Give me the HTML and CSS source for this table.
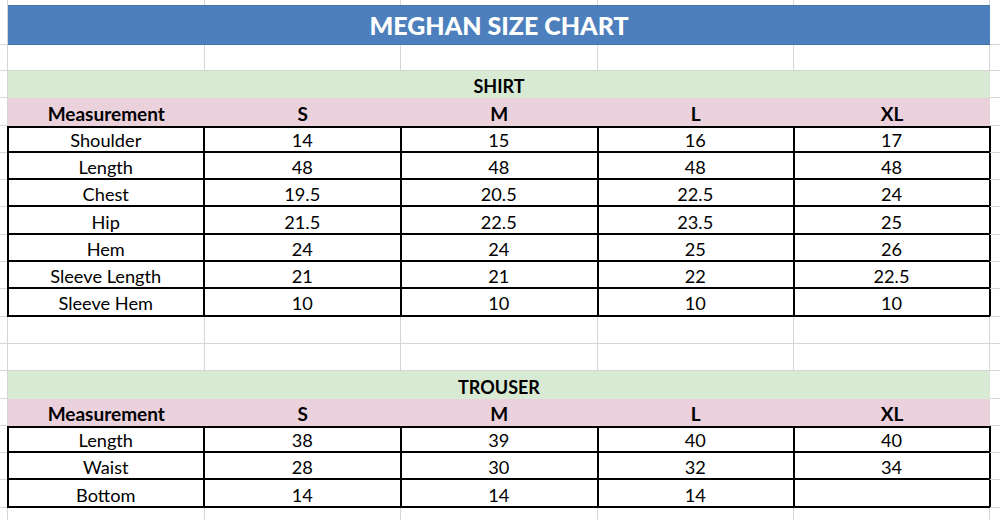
FILE: index.html
```html
<!DOCTYPE html>
<html lang="en">
<head>
<meta charset="utf-8">
<title>Meghan Size Chart</title>
<link rel="stylesheet" href="styles.css">
</head>
<body>
<div class="sheet">
  <div class="row r-top"><div class="c stub"></div><div class="c"></div><div class="c"></div><div class="c"></div><div class="c"></div><div class="c"></div><div class="c tail"></div></div>
  <div class="row r-title"><div class="c stub"></div><div class="c span title">MEGHAN SIZE CHART</div><div class="c tail"></div></div>
  <div class="row r-gap"><div class="c stub"></div><div class="c"></div><div class="c"></div><div class="c"></div><div class="c"></div><div class="c"></div><div class="c tail"></div></div>

  <div class="row"><div class="c stub"></div><div class="c span section">SHIRT</div><div class="c tail"></div></div>
  <div class="row"><div class="c stub"></div><div class="c head">Measurement</div><div class="c head">S</div><div class="c head">M</div><div class="c head">L</div><div class="c head">XL</div><div class="c tail"></div></div>
  <div class="row data first"><div class="c stub"></div><div class="c b lead">Shoulder</div><div class="c b">14</div><div class="c b">15</div><div class="c b">16</div><div class="c b">17</div><div class="c tail"></div></div>
  <div class="row data"><div class="c stub"></div><div class="c b lead">Length</div><div class="c b">48</div><div class="c b">48</div><div class="c b">48</div><div class="c b">48</div><div class="c tail"></div></div>
  <div class="row data"><div class="c stub"></div><div class="c b lead">Chest</div><div class="c b">19.5</div><div class="c b">20.5</div><div class="c b">22.5</div><div class="c b">24</div><div class="c tail"></div></div>
  <div class="row data"><div class="c stub"></div><div class="c b lead">Hip</div><div class="c b">21.5</div><div class="c b">22.5</div><div class="c b">23.5</div><div class="c b">25</div><div class="c tail"></div></div>
  <div class="row data"><div class="c stub"></div><div class="c b lead">Hem</div><div class="c b">24</div><div class="c b">24</div><div class="c b">25</div><div class="c b">26</div><div class="c tail"></div></div>
  <div class="row data"><div class="c stub"></div><div class="c b lead">Sleeve Length</div><div class="c b">21</div><div class="c b">21</div><div class="c b">22</div><div class="c b">22.5</div><div class="c tail"></div></div>
  <div class="row data"><div class="c stub"></div><div class="c b lead">Sleeve Hem</div><div class="c b">10</div><div class="c b">10</div><div class="c b">10</div><div class="c b">10</div><div class="c tail"></div></div>

  <div class="row"><div class="c stub"></div><div class="c"></div><div class="c"></div><div class="c"></div><div class="c"></div><div class="c"></div><div class="c tail"></div></div>
  <div class="row"><div class="c stub"></div><div class="c"></div><div class="c"></div><div class="c"></div><div class="c"></div><div class="c"></div><div class="c tail"></div></div>

  <div class="row"><div class="c stub"></div><div class="c span section">TROUSER</div><div class="c tail"></div></div>
  <div class="row"><div class="c stub"></div><div class="c head">Measurement</div><div class="c head">S</div><div class="c head">M</div><div class="c head">L</div><div class="c head">XL</div><div class="c tail"></div></div>
  <div class="row data first"><div class="c stub"></div><div class="c b lead">Length</div><div class="c b">38</div><div class="c b">39</div><div class="c b">40</div><div class="c b">40</div><div class="c tail"></div></div>
  <div class="row data"><div class="c stub"></div><div class="c b lead">Waist</div><div class="c b">28</div><div class="c b">30</div><div class="c b">32</div><div class="c b">34</div><div class="c tail"></div></div>
  <div class="row data"><div class="c stub"></div><div class="c b lead">Bottom</div><div class="c b">14</div><div class="c b">14</div><div class="c b">14</div><div class="c b"></div><div class="c tail"></div></div>

  <div class="row"><div class="c stub"></div><div class="c"></div><div class="c"></div><div class="c"></div><div class="c"></div><div class="c"></div><div class="c tail"></div></div>
</div>
</body>
</html>
```

FILE: styles.css
```css
* { box-sizing: border-box; }
html, body {
  margin: 0;
  padding: 0;
  background: #ffffff;
}
body {
  width: 1000px;
  height: 520px;
  overflow: hidden;
  font-family: Lato, "Open Sans", "Liberation Sans", sans-serif;
  color: #000;
}
.sheet {
  display: flex;
  flex-direction: column;
}
.row {
  display: grid;
  grid-template-columns: 8px 196.5px 196.5px 196.5px 196.5px 196px 1fr;
  height: 27.3px;
  flex: none;
}
.r-top { height: 5px; }
.r-title { height: 40px; }
.r-gap { height: 26px; }
.c {
  display: flex;
  align-items: flex-end;
  justify-content: center;
  padding-bottom: 3px;
  font-size: 18.2px;
  line-height: 1;
  border-right: 1px solid #d6d6d6;
  border-bottom: 1px solid #d6d6d6;
  white-space: nowrap;
}
.stub { padding: 0; }
.tail { border-right: none; }
.r-top .c { border-bottom: none; }
.span { grid-column: 2 / span 5; }
.title {
  background: #4d7fbd;
  color: #ffffff;
  font-weight: 900;
  font-size: 25px;
  align-items: center;
  padding-bottom: 0;
  border: none;
  border-top: 1px solid #4474b0;
  border-bottom: 1px solid #4474b0;
}
.section {
  background: #d9ead4;
  font-weight: 700;
  font-size: 18px;
  border: none;
}
.head {
  background: #ead1dc;
  font-weight: 700;
  font-size: 19px;
  border: none;
}
.b {
  border-right: 2px solid #000;
  border-bottom: 2px solid #000;
  margin-right: -1px;
}
.b.lead { border-left: 2px solid #000; margin-left: -1px; margin-right: 0; }
.first .b { border-top: 2px solid #000; }
.data .c { padding-bottom: 2px; }
.data .stub, .data .tail { padding: 0; }
```
